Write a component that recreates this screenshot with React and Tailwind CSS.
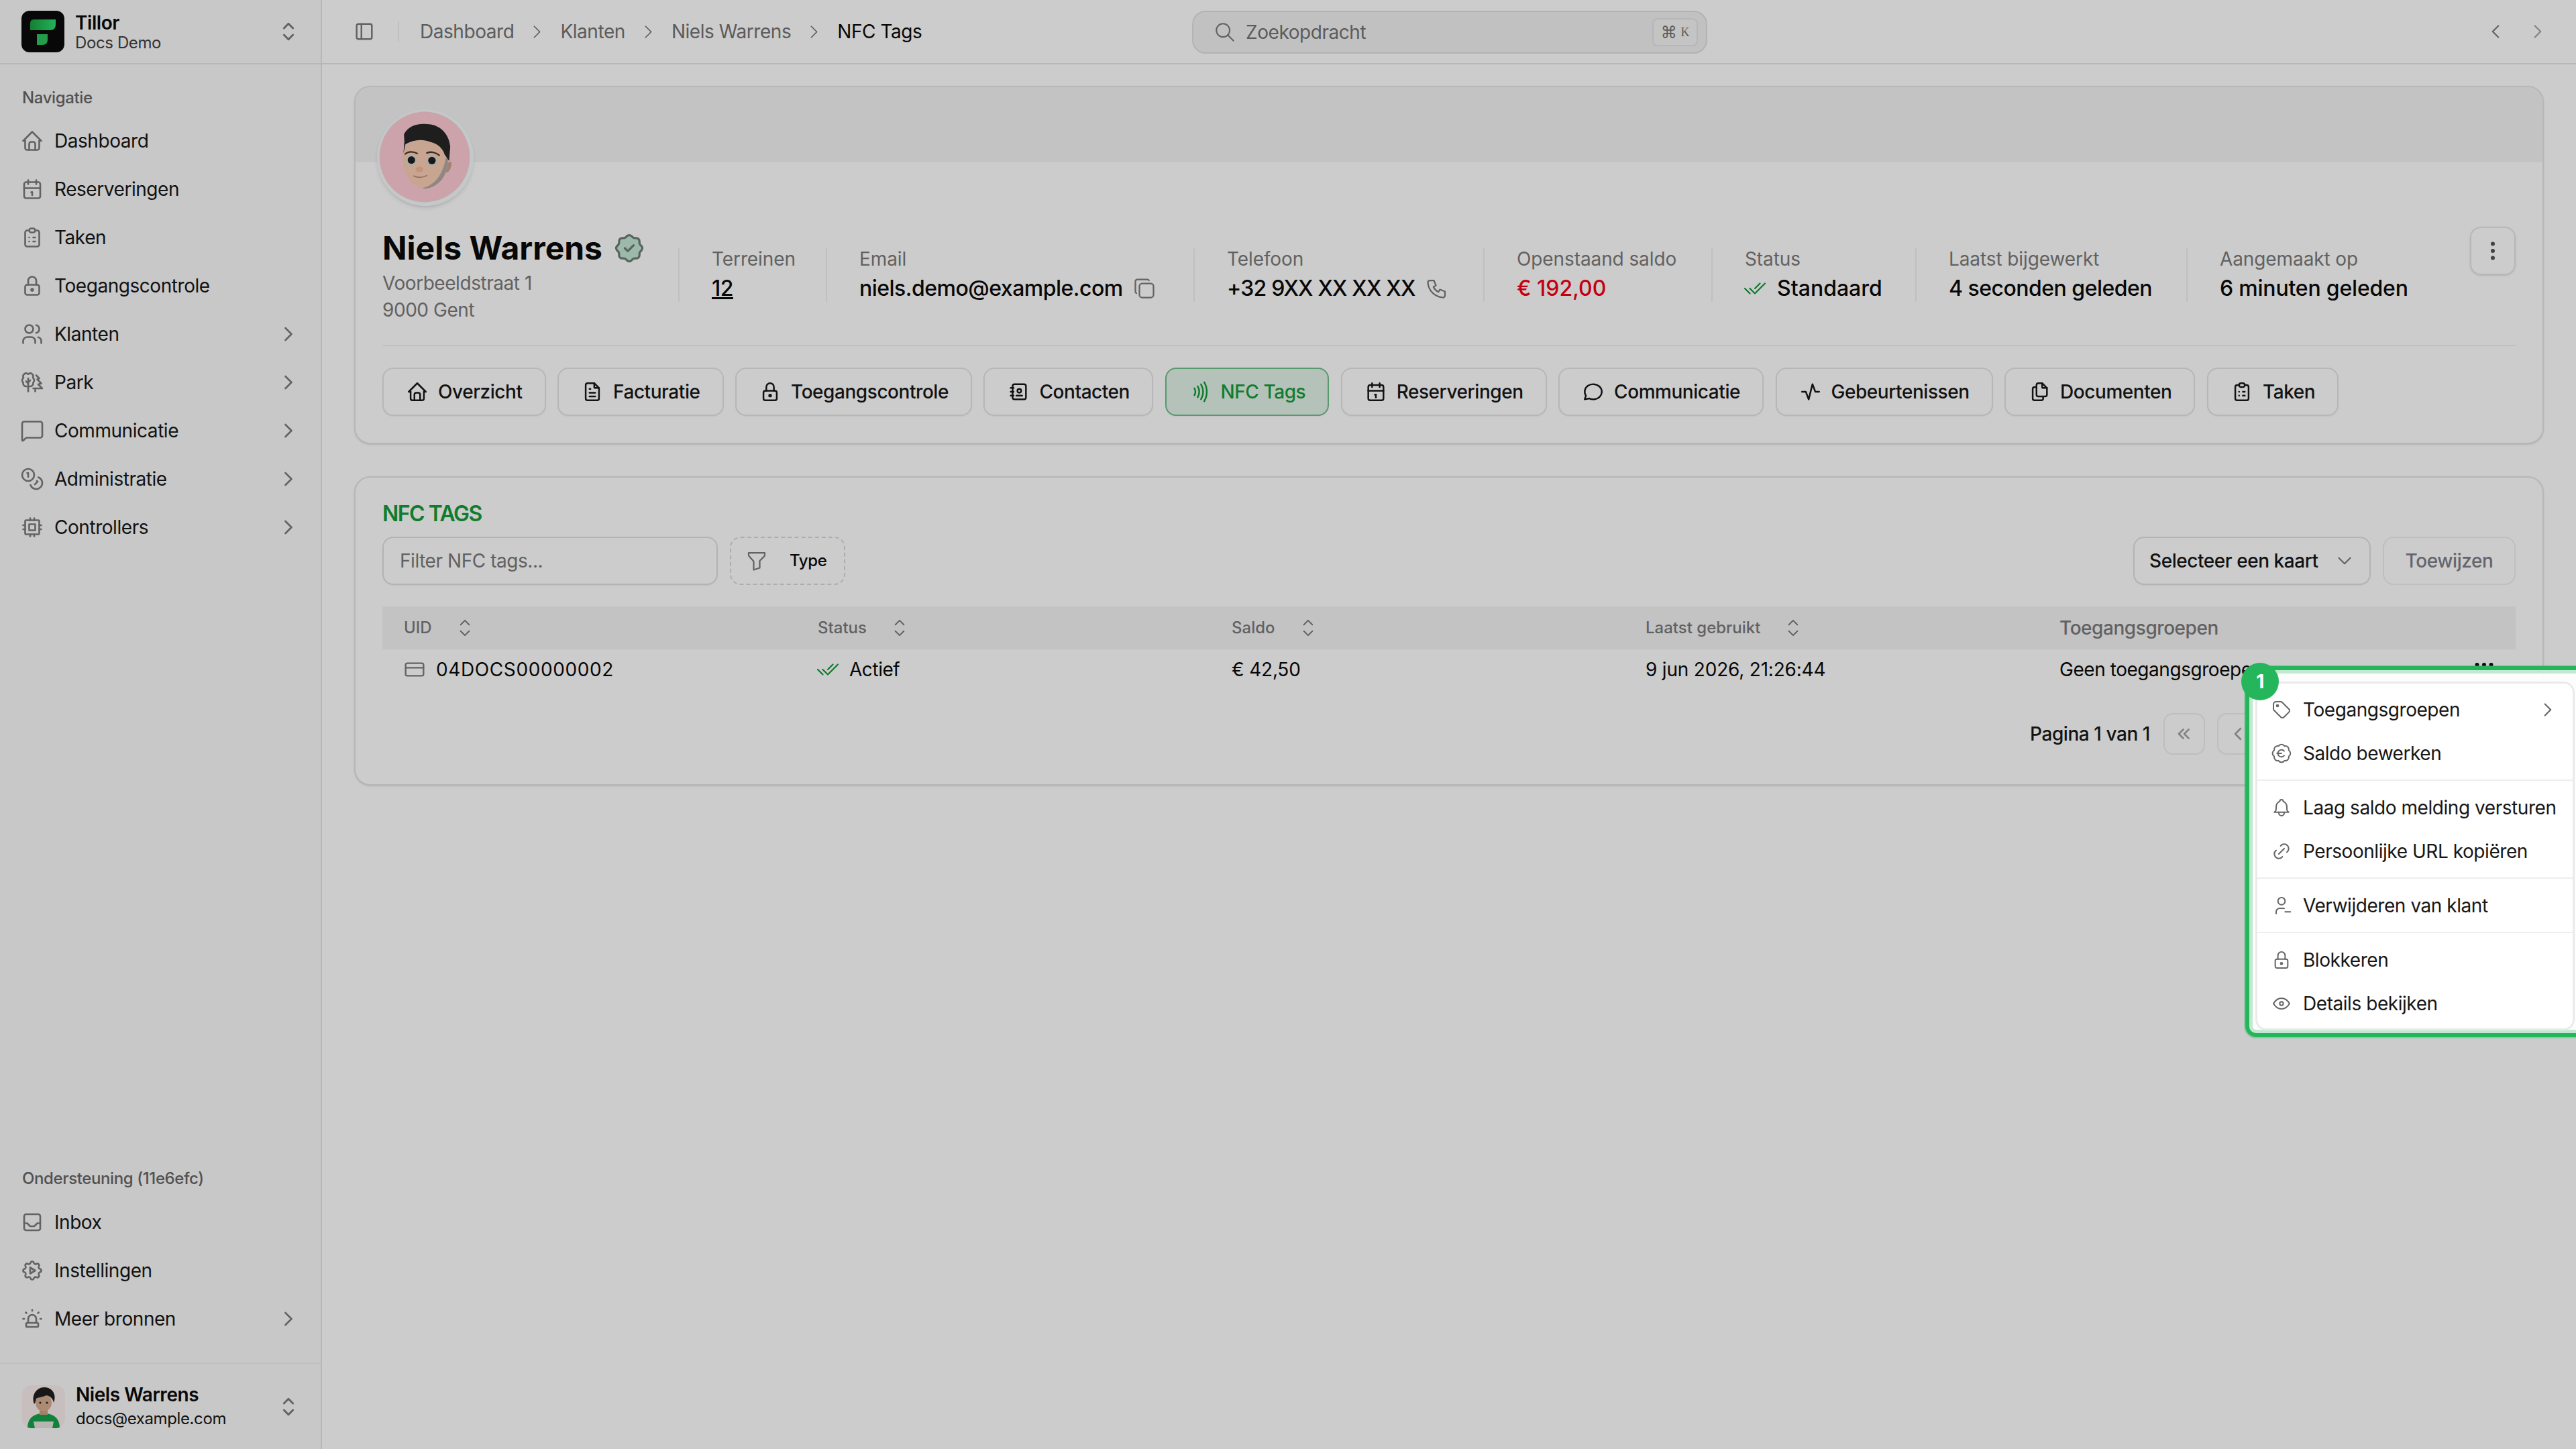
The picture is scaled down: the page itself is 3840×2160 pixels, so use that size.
import { Nfc, BadgeEuro, CreditCard, Coins, MessageSquare } from 'lucide-react';
import {
  TbHome, TbCalendar, TbClipboardList, TbLock, TbUsers, TbTrees, TbCpu,
  TbChevronRight, TbChevronLeft, TbChevronDown, TbChevronsLeft, TbSelector, TbInbox, TbSettingsAutomation, TbUrgent,
  TbLayoutSidebar, TbSearch, TbRosetteDiscountCheck, TbCopy, TbPhone, TbChecks, TbDotsVertical, TbDots,
  TbFileText, TbAddressBook, TbMessageCircle, TbActivity, TbFiles, TbFilter,
  TbTag, TbBell, TbLink, TbUserMinus, TbEye,
} from 'react-icons/tb';

const navItems = [
  { label: 'Dashboard', icon: TbHome },
  { label: 'Reserveringen', icon: TbCalendar },
  { label: 'Taken', icon: TbClipboardList },
  { label: 'Toegangscontrole', icon: TbLock },
  { label: 'Klanten', icon: TbUsers, more: true },
  { label: 'Park', icon: TbTrees, more: true },
  { label: 'Communicatie', icon: MessageSquare, more: true },
  { label: 'Administratie', icon: Coins, more: true },
  { label: 'Controllers', icon: TbCpu, more: true },
];

const supportItems = [
  { label: 'Inbox', icon: TbInbox },
  { label: 'Instellingen', icon: TbSettingsAutomation },
  { label: 'Meer bronnen', icon: TbUrgent, more: true },
];

const tabs = [
  { label: 'Overzicht', icon: TbHome },
  { label: 'Facturatie', icon: TbFileText },
  { label: 'Toegangscontrole', icon: TbLock },
  { label: 'Contacten', icon: TbAddressBook },
  { label: 'NFC Tags', icon: Nfc, active: true },
  { label: 'Reserveringen', icon: TbCalendar },
  { label: 'Communicatie', icon: TbMessageCircle },
  { label: 'Gebeurtenissen', icon: TbActivity },
  { label: 'Documenten', icon: TbFiles },
  { label: 'Taken', icon: TbClipboardList },
];

const menuGroups = [
  [
    { label: 'Toegangsgroepen', icon: TbTag, more: true },
    { label: 'Saldo bewerken', icon: BadgeEuro },
  ],
  [
    { label: 'Laag saldo melding versturen', icon: TbBell },
    { label: 'Persoonlijke URL kopiëren', icon: TbLink },
  ],
  [{ label: 'Verwijderen van klant', icon: TbUserMinus }],
  [
    { label: 'Blokkeren', icon: TbLock },
    { label: 'Details bekijken', icon: TbEye },
  ],
];

const Logo = () => (
  <svg viewBox="0 0 64 62" className="w-[64px] h-[62px] shrink-0">
    <defs>
      <linearGradient id="logoGreen" x1="0" x2="1" y1="0" y2="0">
        <stop offset="0" stopColor="#1b9e40" />
        <stop offset="1" stopColor="#2ce070" />
      </linearGradient>
    </defs>
    <rect width="64" height="62" rx="12" fill="#0a0a0a" />
    <path d="M19 13H51V20C51 26 48 29 43 29H13V19C13 15 15 13 19 13Z" fill="url(#logoGreen)" />
    <path d="M23 35H39V43C39 48 36 51 31 51H23Z" fill="#2fc460" />
  </svg>
);

const Memoji = () => (
  <svg viewBox="36 36 438 438" className="w-[144px] h-[144px] shrink-0 rounded-full relative shadow-md">
    <circle cx="255" cy="255" r="219" fill="#f4fafa" />
    <circle cx="252" cy="252" r="205" fill="#ffccd6" />
    <path d="M352 282C375 262 378 282 370 302C362 326 342 328 340 312Z" fill="#c9a48e" />
    <path d="M152 235C146 300 172 364 225 390C272 404 332 374 348 320L364 240C340 150 170 150 152 235Z" fill="#fbcfb4" />
    <path d="M348 320C332 374 272 404 240 394C292 382 332 340 347 260L364 240Z" fill="#b5a9a4" />
    <path d="M158 150C175 112 220 98 262 103C322 103 364 150 368 205L363 270L342 240C336 215 312 192 280 184C240 170 205 172 165 194L156 235L160 180Z" fill="#262626" />
    <path d="M164 238C178 226 200 226 218 236M262 234C280 226 302 230 318 244" fill="none" stroke="#4a3a32" strokeWidth="7" strokeLinecap="round" />
    <circle cx="192" cy="266" r="24" fill="#d8d8d8" />
    <circle cx="192" cy="266" r="17" fill="#1f1f1f" />
    <circle cx="285" cy="268" r="24" fill="#d8d8d8" />
    <circle cx="285" cy="268" r="17" fill="#1f1f1f" />
    <ellipse cx="228" cy="308" rx="17" ry="13" fill="#f4b89c" />
    <path d="M202 338Q232 352 262 336" fill="none" stroke="#b98a72" strokeWidth="5" strokeLinecap="round" />
  </svg>
);

const UserAvatar = () => (
  <svg viewBox="0 0 64 64" className="w-[64px] h-[64px] shrink-0 rounded-[14px]">
    <rect width="64" height="64" fill="#fbeeee" />
    <path d="M8 64C8 50 16 42 32 42C48 42 56 50 56 64Z" fill="#16a34a" />
    <path d="M17 54H47L45 64H19Z" fill="#e7e2de" />
    <rect x="26" y="32" width="12" height="12" fill="#c8a083" />
    <ellipse cx="32" cy="26" rx="12" ry="13" fill="#d6ae90" />
    <path d="M18 28C13 14 22 3 33 3C45 3 52 14 47 26C46 20 42 16 36 15C30 18 23 18 21 20C20 23 20 26 18 28Z" fill="#1f1f1f" />
    <circle cx="27" cy="26" r="1.6" fill="#222" />
    <circle cx="37" cy="26" r="1.6" fill="#222" />
  </svg>
);

const SidebarRow = ({ item }) => {
  const Icon = item.icon;
  return (
    <div className="h-[72px] flex items-center pl-[30px] pr-[30px]">
      <Icon size={36} strokeWidth={1.75} className="text-[#7c7c7c] shrink-0" />
      <span className="ml-[15px] text-[28px] text-[#171717]">{item.label}</span>
      {item.more && <TbChevronRight size={36} strokeWidth={1.75} className="ml-auto text-[#7c7c7c]" />}
    </div>
  );
};

const Sidebar = () => (
  <aside className="w-[480px] shrink-0 h-screen flex flex-col bg-[#fafafa] border-r-2 border-[#e5e5e5]">
    <div className="h-[96px] shrink-0 flex items-center pl-[32px] pr-[28px] border-b-2 border-[#e5e5e5]">
      <Logo />
      <div className="ml-[16px] flex flex-col">
        <span className="text-[28px] leading-[33px] font-semibold text-[#0a0a0a]">Tillor</span>
        <span className="text-[24px] leading-[26px] text-[#404040]">Docs Demo</span>
      </div>
      <TbSelector size={40} strokeWidth={1.75} className="ml-auto text-[#7c7c7c]" />
    </div>
    <div className="pt-[34px]">
      <div className="pl-[33px] h-[32px] leading-[32px] text-[24px] font-medium text-[#666]">Navigatie</div>
      <div className="mt-[12px]">
        {navItems.map((item) => <SidebarRow key={item.label} item={item} />)}
      </div>
    </div>
    <div className="mt-auto">
      <div className="pl-[33px] h-[32px] leading-[32px] text-[24px] font-medium text-[#666] mb-[13px]">Ondersteuning (11e6efc)</div>
      {supportItems.map((item) => <SidebarRow key={item.label} item={item} />)}
    </div>
    <div className="mt-[29px] h-[129px] shrink-0 border-t-2 border-[#f0f0f0] flex items-center pl-[33px] pr-[28px]">
      <UserAvatar />
      <div className="ml-[16px] flex flex-col">
        <span className="text-[28px] leading-[36px] font-semibold text-[#0a0a0a]">Niels Warrens</span>
        <span className="text-[24px] leading-[36px] text-[#171717]">docs@example.com</span>
      </div>
      <TbSelector size={40} strokeWidth={1.75} className="ml-auto text-[#7c7c7c]" />
    </div>
  </aside>
);

const TopBar = () => (
  <header className="h-[96px] shrink-0 flex items-center border-b-2 border-[#e5e5e5] pl-[46px] pr-[40px] relative">
    <TbLayoutSidebar size={34} strokeWidth={1.75} className="text-[#7c7c7c]" />
    <div className="w-[2px] h-[32px] bg-[#f0f0f0] ml-[33px] mr-[31px]" />
    <nav className="flex items-center text-[28px] text-[#737373]">
      <span>Dashboard</span>
      <TbChevronRight size={33} strokeWidth={1.25} className="mx-[18px]" />
      <span>Klanten</span>
      <TbChevronRight size={33} strokeWidth={1.25} className="mx-[18px]" />
      <span>Niels Warrens</span>
      <TbChevronRight size={33} strokeWidth={1.25} className="mx-[18px]" />
      <span className="text-[#0a0a0a]">NFC Tags</span>
    </nav>
    <div className="absolute left-[1297px] top-[16px] w-[768px] h-[64px] flex items-center rounded-[20px] bg-[#f2f2f2] border-2 border-[#e0e0e0] pl-[30px] pr-[12px]">
      <TbSearch size={34} strokeWidth={1.5} className="text-[#7c7c7c]" />
      <span className="ml-[14px] text-[28px] text-[#737373]">Zoekopdracht</span>
      <span className="ml-auto h-[42px] w-[68px] flex items-center justify-center gap-[6px] rounded-[8px] border-2 border-[#e5e5e5] bg-[#f5f5f5] text-[#737373]">
        <span className="text-[24px]">⌘</span>
        <span className="text-[18px] font-['Liberation_Serif',serif]">K</span>
      </span>
    </div>
    <div className="ml-auto flex items-center gap-[29px]">
      <TbChevronLeft size={34} strokeWidth={1.5} className="text-[#7c7c7c]" />
      <TbChevronRight size={34} strokeWidth={1.5} className="text-[#a3a3a3]" />
    </div>
  </header>
);

const Stat = ({ label, width, children }) => (
  <div className={`h-[80px] border-l-2 border-[#f0f0f0] pl-[48px] flex flex-col gap-[8px] ${width}`}>
    <span className="text-[28px] leading-[32px] !tracking-[-0.1px] text-[#7a7a7a] whitespace-nowrap">{label}</span>
    <div className="text-[32px] leading-[40px] font-medium text-[#0a0a0a] flex items-center whitespace-nowrap">{children}</div>
  </div>
);

const ProfileCard = () => (
  <section className="border-2 border-[#e5e5e5] rounded-[24px] bg-white shadow-sm overflow-hidden">
    <div className="h-[112px] bg-[#f4f4f5]" />
    <div className="px-[40px] pb-[40px]">
      <div className="-mt-[79px] -ml-[8px] relative w-[144px] h-[144px]">
        <Memoji />
      </div>
      <div className="mt-[31px] flex items-start">
        <div className="w-[441px] shrink-0">
          <div className="flex items-center h-[64px]">
            <span className="text-[48px] leading-[64px] font-bold !tracking-[0px] text-[#0a0a0a]">Niels Warrens</span>
            <TbRosetteDiscountCheck size={52} strokeWidth={1.5} className="ml-[14px] text-[#6f7f76] fill-[#c5e8d6]" />
          </div>
          <div className="text-[28px] leading-[40px] text-[#7a7a7a]">Voorbeeldstraat 1</div>
          <div className="text-[28px] leading-[40px] text-[#7a7a7a]">9000 Gent</div>
        </div>
        <div className="flex mt-[32px]">
          <Stat label="Terreinen" width="w-[220px]"><span className="underline">12</span></Stat>
          <Stat label="Email" width="w-[548px]">
            <span>niels.demo@example.com</span>
            <TbCopy size={36} strokeWidth={1.5} className="ml-[14px] text-[#7c7c7c]" />
          </Stat>
          <Stat label="Telefoon" width="w-[432px]">
            <span className="!tracking-[-0.8px]">+32 9XX XX XX XX</span>
            <TbPhone size={36} strokeWidth={1.5} className="ml-[14px] text-[#7c7c7c]" />
          </Stat>
          <Stat label="Openstaand saldo" width="w-[340px]"><span className="text-[#f50013] !tracking-[0px]">€ 192,00</span></Stat>
          <Stat label="Status" width="w-[304px]">
            <TbChecks size={36} strokeWidth={1.5} className="-ml-[3px] mr-[15px] text-[#159c3a]" />
            <span className="!tracking-[0px]">Standaard</span>
          </Stat>
          <Stat label="Laatst bijgewerkt" width="w-[404px]"><span>4 seconden geleden</span></Stat>
          <Stat label="Aangemaakt op" width="w-[372px]"><span className="!tracking-[-0.2px]">6 minuten geleden</span></Stat>
        </div>
        <button className="ml-auto w-[68px] h-[72px] shrink-0 flex items-center justify-center rounded-[16px] border-2 border-[#e5e5e5] shadow-sm">
          <TbDotsVertical size={36} className="text-[#525252]" />
        </button>
      </div>
      <div className="mt-[32px] h-[2px] bg-[#f0f0f0]" />
      <div className="mt-[32px] flex gap-[17.5px]">
        {tabs.map((tab) => {
          const Icon = tab.icon;
          return (
            <div
              key={tab.label}
              className={`h-[72px] flex items-center gap-[14px] px-[33px] rounded-[16px] border-2 shadow-xs text-[28px] font-medium ${tab.active ? 'bg-[#e2f3e8] border-[#6fc08a] text-[#159c3a]' : 'bg-white border-[#e5e5e5] text-[#171717]'}`}
            >
              <Icon size={34} strokeWidth={1.75} />
              {tab.label}
            </div>
          );
        })}
      </div>
    </div>
  </section>
);

const SortHead = ({ label }) => (
  <div className="flex items-center text-[24px] font-medium text-[#7a7a7a]">
    <span className="!tracking-[0px]">{label}</span>
    <TbSelector size={38} strokeWidth={1.25} className="ml-[30px]" />
  </div>
);

const PageButton = ({ children }) => (
  <button className="w-[62px] h-[62px] flex items-center justify-center rounded-[14px] border-2 border-[#eeeeee] text-[#a3a3a3]">
    {children}
  </button>
);

const TagsCard = () => (
  <section className="border-2 border-[#e5e5e5] rounded-[24px] bg-white shadow-sm px-[40px] pt-[40px] pb-[44px]">
    <h2 className="text-[32px] leading-[28px] font-semibold !tracking-[-1.5px] text-[#159c3a]">NFC TAGS</h2>
    <div className="mt-[20px] flex items-center">
      <div className="w-[500px] h-[72px] flex items-center rounded-[16px] border-2 border-[#e0e0e0] shadow-xs px-[24px] text-[28px] text-[#7a7a7a]">Filter NFC tags...</div>
      <div className="ml-[18px] w-[172px] h-[72px] flex items-center rounded-[16px] border-2 border-dashed border-[#d9d9d9] pl-[20px] text-[24px] font-medium text-[#0a0a0a]">
        <TbFilter size={36} strokeWidth={1.5} className="text-[#7c7c7c]" />
        <span className="ml-[31px]">Type</span>
      </div>
      <div className="ml-auto w-[354px] h-[72px] flex items-center justify-between rounded-[16px] border-2 border-[#e0e0e0] shadow-xs pl-[22px] pr-[20px] text-[28px] font-medium text-[#171717]">
        <span>Selecteer een kaart</span>
        <TbChevronDown size={34} strokeWidth={1.5} className="text-[#7c7c7c]" />
      </div>
      <div className="ml-[18px] w-[198px] h-[72px] flex items-center justify-center rounded-[16px] border-2 border-[#efefef] text-[28px] font-medium text-[#7f7f88]">Toewijzen</div>
    </div>
    <div className="mt-[32px] h-[64px] grid grid-cols-[617px_617px_617px_617px_1fr] items-center bg-[#f4f4f5] pl-[32px]">
      <SortHead label="UID" />
      <SortHead label="Status" />
      <SortHead label="Saldo" />
      <SortHead label="Laatst gebruikt" />
      <div className="text-[28px] font-medium text-[#7a7a7a]">Toegangsgroepen</div>
    </div>
    <div className="h-[60px] grid grid-cols-[617px_617px_617px_617px_1fr] items-center pl-[32px] text-[28px] text-[#0a0a0a]">
      <div className="flex items-center">
        <CreditCard size={32} strokeWidth={1.75} className="text-[#7c7c7c]" />
        <span className="ml-[16px] !tracking-[0.6px]">04DOCS00000002</span>
      </div>
      <div className="flex items-center">
        <TbChecks size={36} strokeWidth={1.5} className="-ml-[3px] mr-[14px] text-[#159c3a]" />
        <span>Actief</span>
      </div>
      <div className="!tracking-[-0.2px]">€ 42,50</div>
      <div className="!tracking-[-0.2px]">9 jun 2026, 21:26:44</div>
      <div className="flex items-center pr-[29px]">
        <span>Geen toegangsgroepen</span>
        <TbDots size={36} className="ml-auto relative -top-[7px]" />
      </div>
    </div>
    <div className="mt-[35px] flex items-center justify-end">
      <span className="text-[28px] font-medium text-[#171717] mr-[20px]">Pagina 1 van 1</span>
      <div className="flex gap-[18px]">
        <PageButton><TbChevronsLeft size={32} /></PageButton>
        <PageButton><TbChevronLeft size={32} /></PageButton>
        <PageButton><TbChevronRight size={32} /></PageButton>
        <PageButton><TbChevronsLeft size={32} className="rotate-180" /></PageButton>
      </div>
      <div className="ml-[24px] w-[199px] h-[62px] flex items-center pl-[36px] rounded-[14px] border-2 border-[#eeeeee] text-[28px]">10 rijen</div>
    </div>
  </section>
);

const RowMenu = () => (
  <>
    <div className="absolute left-[3347px] top-[993px] w-[520px] h-[553px] rounded-[16px] border-[6px] border-[#25b65c] bg-white/95 shadow-[0_0_0_2px_rgba(37,182,92,0.3),inset_0_0_0_5px_rgba(37,182,92,0.28)]" />
    <div className="absolute left-[3362px] top-[1016px] w-[476px] h-[520px] rounded-[16px] border-[3px] border-[#eaeaea] bg-white/[.98] px-[5px] pt-[6px]">
      {menuGroups.map((group, i) => (
        <div key={i} className={i > 0 ? 'mt-[7px] pt-[7px] border-t-2 border-[#eeeeee] -mx-[5px] px-[5px]' : ''}>
          {group.map((item) => {
            const Icon = item.icon;
            return (
              <div key={item.label} className="h-[65px] flex items-center pl-[15px] pr-[15px]">
                <Icon size={32} strokeWidth={1.5} className="text-[#666] shrink-0" />
                <span className="ml-[16px] text-[28px] text-[#171717] whitespace-nowrap">{item.label}</span>
                {item.more && <TbChevronRight size={34} strokeWidth={1.5} className="ml-auto text-[#666]" />}
              </div>
            );
          })}
        </div>
      ))}
    </div>
    <div className="absolute left-[3341px] top-[988px] w-[56px] h-[56px] rounded-full bg-[#25b65c] flex items-center justify-center text-[28px] font-bold text-white">1</div>
  </>
);

export default function App() {
  return (
    <div className="relative w-screen h-screen overflow-hidden flex bg-white font-['Inter',sans-serif] [&_*]:tracking-[-0.016em]">
      <Sidebar />
      <main className="flex-1 min-w-0 flex flex-col">
        <TopBar />
        <div className="px-[48px] py-[32px] flex flex-col gap-[48px]">
          <ProfileCard />
          <TagsCard />
        </div>
      </main>
      <div className="absolute inset-0 bg-black/20" />
      <RowMenu />
    </div>
  );
}
